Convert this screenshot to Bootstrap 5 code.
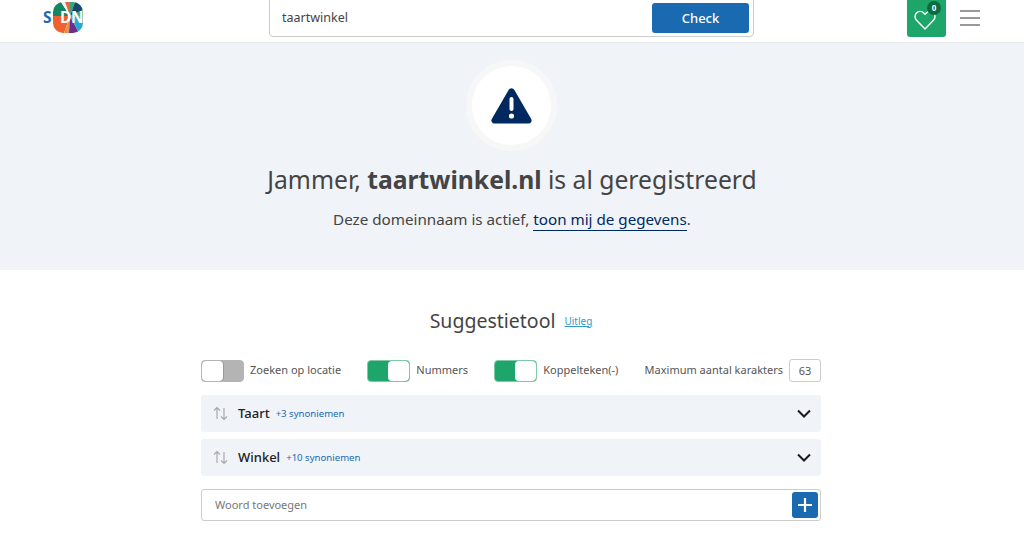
<!DOCTYPE html>
<html lang="nl">
<head>
    <meta charset="UTF-8">
    <title>SIDN - taartwinkel.nl</title>
    <link href="https://cdn.jsdelivr.net/npm/bootstrap@5.3.0/dist/css/bootstrap.min.css" rel="stylesheet">
    <style>
        html, body { height: 550px; overflow: hidden; }
        body { font-family: "Noto Sans", "Open Sans", sans-serif; color: #444; background: #fff; }
        .topbar { height: 43px; border-bottom: 1px solid #e6e8ec; padding-left: 43px; padding-right: 43px; }
        .logo-box { width: 40px; height: 33px; flex: none; margin-bottom: 9px; }
        .logo-txt { font-weight: 700; font-size: 15.5px; }
        .search-wrap { position: absolute; left: 269px; top: -2px; width: 485px; height: 39px; border: 1px solid #ccc; border-radius: 0 0 4px 4px; background: #fff; padding: 4px 4px 3px 12px; }
        .search-text { font-size: 12.5px; color: #444; }
        .btn-check-dom { width: 97px; height: 30px; background: #1a6ab1; color: #fff; border-radius: 3px; font-size: 13px; font-weight: 500; line-height: 30px; padding: 0; border: 0; }
        .fav-tile { position: absolute; left: 907px; top: 0; width: 39px; height: 37px; background: #1ea66a; border-radius: 0 0 3px 3px; }
        .heart-ico { position: absolute; left: 6px; top: 8px; }
        .fav-count { position: absolute; left: 20px; top: 1px; width: 14px; height: 14px; border-radius: 50%; background: #0d6b41; color: #fff; font-size: 8px; font-weight: 700; line-height: 14px; text-align: center; }
        .burger { position: absolute; left: 960px; top: 10px; width: 20px; }
        .burger span { display: block; height: 2px; background: #999; margin-bottom: 5px; }
        .hero { height: 227px; background: #f0f3f8; padding-top: 17px; }
        .alert-ring { width: 91px; height: 91px; margin-right: 2px; border-radius: 50%; background: #fff; border: 6px solid #f7f7f8; }
        .hero-title { font-size: 24.7px; font-weight: 400; line-height: 34px; margin: 12px 0 0; color: #444; }
        .hero-sub { font-size: 15.2px; line-height: 22px; margin: 11px 0 0; color: #444; }
        .hero-sub a { color: #01295f; text-decoration: none; border-bottom: 1px solid #01295f; padding-bottom: 1px; }
        .tool-wrap { width: 620px; margin-left: 201px; }
        .tool-head { margin-top: 36px; height: 30px; }
        .tool-title { font-size: 19.5px; line-height: 30px; color: #444; }
        .tool-help { font-size: 10px; color: #2f9ec9; margin-left: 9px; text-decoration: underline; }
        .opt-row { margin-top: 23px; height: 23px; font-size: 11px; color: #555; }
        .switcher { width: 43px; height: 22px; border-radius: 4px; display: flex; flex: none; overflow: hidden; }
        .switcher i { display: block; width: 21px; height: 100%; }
        .sw-off { background: #b4b4b4; border: 1px solid #b4b4b4; }
        .sw-off i { background: #fff; border-radius: 4px; box-shadow: 0 0 0 1px #999; }
        .sw-on { background: #1ea66a; border: 1px solid #7fc9a6; justify-content: flex-end; }
        .sw-on i { background: #fff; border-radius: 4px; }
        .opt-item { gap: 6px; }
        .max-input { width: 32px; height: 23px; border: 1px solid #ccc; border-radius: 3px; text-align: center; line-height: 21px; font-size: 11px; }
        .syn-list { margin-top: 13px; }
        .syn-row { height: 37px; background: #f0f3f8; border-radius: 3px; margin-bottom: 7px; padding: 0 10px 0 12px; }
        .syn-word { font-size: 13px; font-weight: 500; color: #222; margin-left: 10px; }
        .syn-count { font-size: 9.6px; color: #1a6ab1; margin-left: 6px; margin-top: 1px; }
        .add-row { height: 32px; border: 1px solid #ccc; border-radius: 3px; margin-top: 13px; padding: 0 2px 0 13px; font-size: 11px; color: #777; }
        .add-btn { width: 26px; height: 26px; background: #1a6ab1; border-radius: 3px; }
    </style>
</head>
<body>
    <!-- Kopbalk -->
    <header class="topbar d-flex align-items-center position-relative">
        <svg class="logo-box" viewBox="0 0 40 33" aria-label="SIDN">
            <defs><clipPath id="blob"><rect x="10" y="2" width="30" height="31" rx="10"/></clipPath></defs>
            <g clip-path="url(#blob)">
                <rect x="10" y="2" width="30" height="31" fill="#fff"/>
                <polygon points="10,2 18,2 27,16 10,16" fill="#12875f"/>
                <polygon points="18,2 22,2 27,16" fill="#f4f4f4"/>
                <polygon points="22,2 27,2 27,16" fill="#e5674a"/>
                <polygon points="27,2 32,2 27,16" fill="#3aa574"/>
                <polygon points="32,2 40,2 40,10 27,16" fill="#17496f"/>
                <polygon points="40,10 40,17 27,16" fill="#3aa574"/>
                <polygon points="10,16 27,16 21,33 10,33" fill="#f0602c"/>
                <polygon points="21,33 27,16 26,33" fill="#e8914f"/>
                <polygon points="26,33 27,16 36,33" fill="#6b2d90"/>
                <polygon points="27,16 40,17 40,33 36,33" fill="#29a9c9"/>
            </g>
            <text class="logo-txt" x="0" y="23" fill="#1a6ab1">S</text>
            <text class="logo-txt" x="17" y="23" fill="#fff">D</text>
            <text class="logo-txt" x="28" y="23" fill="#fff">N</text>
        </svg>
        <div class="search-wrap d-flex align-items-center justify-content-between">
            <span class="search-text">taartwinkel</span>
            <button class="btn-check-dom" type="button">Check</button>
        </div>
        <div class="fav-tile">
            <svg class="heart-ico" width="24" height="24" viewBox="0 0 24 24" fill="none" stroke="#fff" stroke-width="1.4"><path d="M12 21 3.500 12.300a5.300 5.300 0 0 1 0-7.400 5 5 0 0 1 7.200 0L12 6.200l1.300-1.300a5 5 0 0 1 7.200 0 5.300 5.300 0 0 1 0 7.400Z"/></svg>
            <span class="fav-count">0</span>
        </div>
        <div class="burger"><span></span><span></span><span></span></div>
    </header>

    <!-- Resultaat -->
    <section class="hero d-flex flex-column align-items-center text-center">
        <div class="alert-ring d-flex align-items-center justify-content-center">
            <svg width="41" height="36" viewBox="0 0 41 36"><path d="M17.600 2 .8 31a3 3 0 0 0 2.600 4.500h34.200a3 3 0 0 0 2.600-4.500L23.400 2a3.300 3.300 0 0 0-5.800 0Z" fill="#01295f"/><rect x="18.500" y="9" width="4" height="14" rx="2" fill="#fff"/><circle cx="20.500" cy="28" r="2.600" fill="#fff"/></svg>
        </div>
        <h1 class="hero-title">Jammer, <strong>taartwinkel.nl</strong> is al geregistreerd</h1>
        <p class="hero-sub">Deze domeinnaam is actief, <a href="#">toon mij de gegevens</a>.</p>
    </section>

    <!-- Suggestietool -->
    <section class="tool-wrap">
        <div class="tool-head d-flex align-items-center justify-content-center">
            <span class="tool-title">Suggestietool</span><a class="tool-help" href="#">Uitleg</a>
        </div>
        <div class="opt-row d-flex align-items-center justify-content-between">
            <div class="opt-item d-flex align-items-center"><span class="switcher sw-off"><i></i></span>Zoeken op locatie</div>
            <div class="opt-item d-flex align-items-center"><span class="switcher sw-on"><i></i></span>Nummers</div>
            <div class="opt-item d-flex align-items-center"><span class="switcher sw-on"><i></i></span>Koppelteken(-)</div>
            <div class="opt-item d-flex align-items-center">Maximum aantal karakters<span class="max-input">63</span></div>
        </div>
        <div class="syn-list">
            <div class="syn-row d-flex align-items-center">
                <svg width="15" height="15" viewBox="0 0 15 15" fill="none" stroke="#aaa" stroke-width="1.200"><path d="M4 13V1.500M1 4.500l3-3 3 3M11 2v11.500M8 10.500l3 3 3-3"/></svg>
                <span class="syn-word">Taart</span><span class="syn-count">+3 synoniemen</span>
                <svg class="ms-auto" width="14" height="9" viewBox="0 0 14 9" fill="none" stroke="#1a1a1a" stroke-width="2"><path d="m1 1.500 6 6 6-6"/></svg>
            </div>
            <div class="syn-row d-flex align-items-center">
                <svg width="15" height="15" viewBox="0 0 15 15" fill="none" stroke="#aaa" stroke-width="1.200"><path d="M4 13V1.500M1 4.500l3-3 3 3M11 2v11.500M8 10.500l3 3 3-3"/></svg>
                <span class="syn-word">Winkel</span><span class="syn-count">+10 synoniemen</span>
                <svg class="ms-auto" width="14" height="9" viewBox="0 0 14 9" fill="none" stroke="#1a1a1a" stroke-width="2"><path d="m1 1.500 6 6 6-6"/></svg>
            </div>
        </div>
        <div class="add-row d-flex align-items-center justify-content-between">
            <span>Woord toevoegen</span>
            <span class="add-btn d-flex align-items-center justify-content-center">
                <svg width="14" height="14" viewBox="0 0 14 14" stroke="#fff" stroke-width="2.200"><path d="M7 0v14M0 7h14"/></svg>
            </span>
        </div>
    </section>

    <script src="https://cdn.jsdelivr.net/npm/bootstrap@5.3.0/dist/js/bootstrap.bundle.min.js"></script>
</body>
</html>
